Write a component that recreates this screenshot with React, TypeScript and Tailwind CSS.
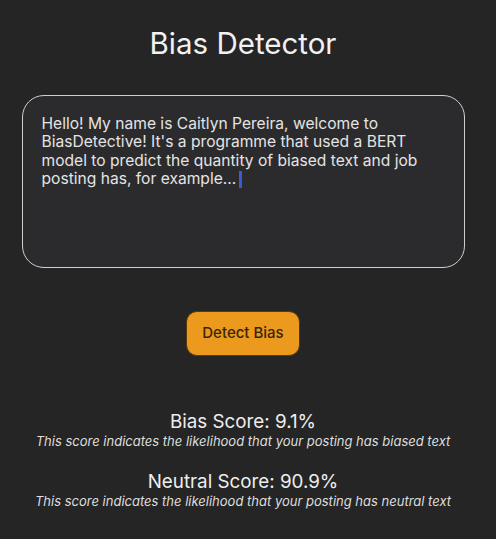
import React from "react";

export default function App() {
  return (
    <div
      className="w-[496px] h-[539px] bg-[#252525] text-white overflow-hidden"
      style={{ fontFamily: "Inter, 'Noto Sans', sans-serif" }}
    >
      <div className="w-[486px] flex flex-col items-center">
        <h1 className="mt-[25px] text-[29.5px] leading-[36px] text-[#f2f2f2] font-normal">Bias Detector</h1>
        <div className="mt-[34px] w-[443px] h-[173px] rounded-[22px] border-[1.5px] border-[#cfcfcf] bg-[#2b2b2d] px-[19px] pt-[19px]">
          <p className="text-[15.6px] leading-[18.3px] text-[#e4e4e4]">
            Hello! My name is Caitlyn Pereira, welcome to BiasDetective! It's a programme that used a BERT model to predict the quantity of biased text and job posting has, for example...
            <span className="inline-block w-[3px] h-[17px] bg-[#3b5bd6] align-[-4px] ml-[3px]" />
          </p>
        </div>
        <button className="mt-[43px] w-[114px] h-[45px] rounded-[11px] bg-[#eb9a1d] border border-[#5a3a0a] text-[15px] text-[#3a2508] font-medium">
          Detect Bias
        </button>
        <div className="mt-[55px] flex flex-col items-center">
          <div className="text-[18.8px] leading-[22px] text-[#eeeeee]">Bias Score: 9.1%</div>
          <div className="text-[13px] leading-[16px] italic text-[#dddddd]">This score indicates the likelihood that your posting has biased text</div>
        </div>
        <div className="mt-[22px] flex flex-col items-center">
          <div className="text-[18.8px] leading-[22px] text-[#eeeeee]">Neutral Score: 90.9%</div>
          <div className="text-[13px] leading-[16px] italic text-[#dddddd]">This score indicates the likelihood that your posting has neutral text</div>
        </div>
      </div>
    </div>
  );
}
